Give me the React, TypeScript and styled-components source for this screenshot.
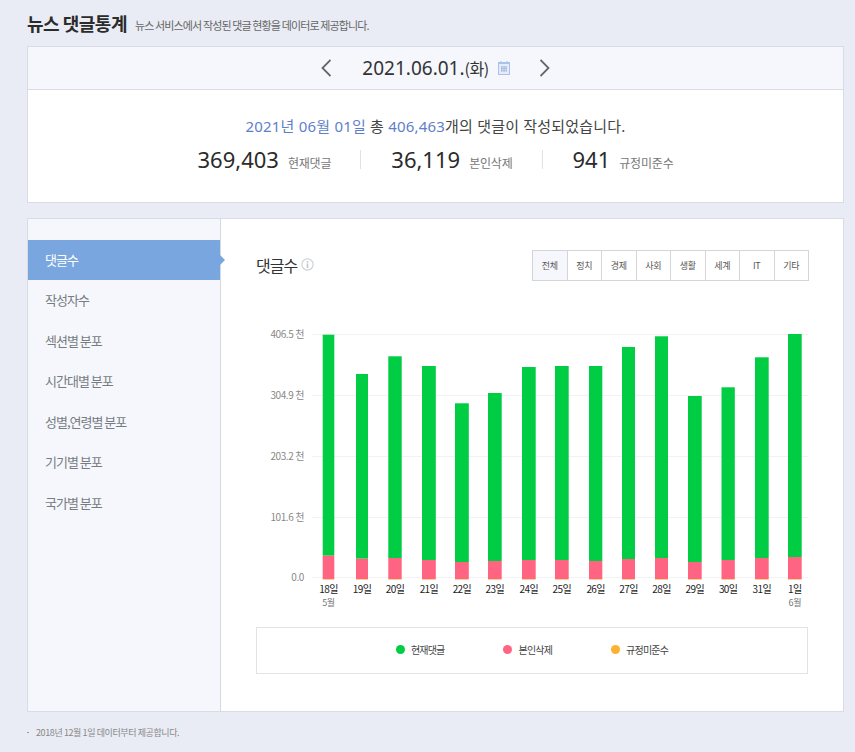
import React from 'react';
import styled, { createGlobalStyle } from 'styled-components';

const GlobalStyle = createGlobalStyle`
    html, body {
        margin: 0;
        padding: 0;
        background: #e9ecf4;
    }
    body {
        font-family: "Noto Sans", "Noto Sans CJK KR", sans-serif;
        color: #333;
    }
`;

const Page = styled.div`
    width: 855px;
    height: 752px;
    overflow: hidden;
    box-sizing: border-box;
    padding: 11px 11px 0 27px;
`;

const Heading = styled.div`
    display: flex;
    align-items: center;
    height: 24px;
    margin-bottom: 11px;
`;

const Title = styled.h1`
    margin: 0 8px 0 0;
    font-size: 18px;
    font-weight: 700;
    letter-spacing: -0.5px;
    color: #2b2b2b;
    font-family: "Noto Sans CJK KR", sans-serif;
`;

const SubTitle = styled.span`
    font-size: 11px;
    letter-spacing: -0.87px;
    color: #666;
    font-family: "Noto Sans CJK KR", sans-serif;
    padding-top: 3px;
`;

const Card = styled.section`
    background: #fff;
    border: 1px solid #d8dce6;
    box-sizing: border-box;
`;

const SummaryCard = styled(Card)`
    height: 157px;
    margin-bottom: 15px;
`;

const DateBar = styled.div`
    display: flex;
    align-items: center;
    justify-content: center;
    height: 43px;
    box-sizing: border-box;
    background: #f5f7fc;
    border-bottom: 1px solid #d8dce6;
`;

const ArrowButton = styled.button`
    display: flex;
    padding: 0;
    border: 0;
    background: none;
`;

const DateText = styled.span`
    margin: 0 9px 0 31px;
    font-size: 19px;
    color: #333;
    white-space: nowrap;
`;

const DateDay = styled.span`
    font-size: 16px;
    font-family: "Noto Sans CJK KR", sans-serif;
    letter-spacing: -0.5px;
`;

const CalendarButton = styled.button`
    display: flex;
    padding: 0;
    margin-right: 30px;
    border: 0;
    background: none;
`;

const SummaryBody = styled.div`
    display: flex;
    flex-direction: column;
    align-items: center;
    padding-top: 24px;
`;

const Sentence = styled.p`
    margin: 0 0 12px;
    height: 24px;
    line-height: 24px;
    font-size: 15px;
    letter-spacing: 0.2px;
    color: #444;
    white-space: nowrap;
`;

const Accent = styled.span`
    color: #5f7fc9;
`;

const StatRow = styled.div`
    display: flex;
    align-items: center;
`;

const Stat = styled.div<{ $first?: boolean; $last?: boolean }>`
    display: flex;
    align-items: baseline;
    height: 19px;
    line-height: 19px;
    padding: 0 ${p => (p.$last ? 0 : 29)}px 0 ${p => (p.$first ? 0 : 30)}px;
    border-right: ${p => (p.$last ? 'none' : '1px solid #dfe2e8')};
`;

const StatValue = styled.strong`
    font-size: 22px;
    font-weight: 400;
    color: #2b2b2b;
    margin-right: 9px;
`;

const StatLabel = styled.span`
    font-size: 12px;
    letter-spacing: -0.2px;
    color: #777;
    font-family: "Noto Sans CJK KR", sans-serif;
`;

const StatsCard = styled(Card)`
    display: flex;
    height: 494px;
`;

const SideNav = styled.nav`
    width: 193px;
    flex: none;
    box-sizing: border-box;
    padding-top: 21px;
    background: #f5f7fc;
    border-right: 1px solid #d3d9e4;
`;

const NavItem = styled.a<{ $active?: boolean }>`
    position: relative;
    display: flex;
    align-items: center;
    height: 40.5px;
    padding: 0 0 2px 17px;
    box-sizing: border-box;
    font-size: 13px;
    letter-spacing: -1px;
    font-family: "Noto Sans CJK KR", sans-serif;
    color: ${p => (p.$active ? '#fff' : '#777b82')};
    background: ${p => (p.$active ? '#79a6de' : 'transparent')};

    ${p =>
        p.$active &&
        `
        width: 192px;
        height: 40px;
        margin-bottom: 0.5px;
        &::after {
            content: '';
            position: absolute;
            left: 192px;
            top: 15px;
            border-left: 5px solid #79a6de;
            border-top: 5px solid transparent;
            border-bottom: 5px solid transparent;
        }
    `}
`;

const Main = styled.div`
    flex: 1;
    padding: 31px 35px 0;
`;

const ChartHeader = styled.div`
    display: flex;
    justify-content: space-between;
    align-items: center;
    height: 31px;
    margin-bottom: 39px;
`;

const ChartTitle = styled.h2`
    display: flex;
    align-items: center;
    gap: 4px;
    margin: 0 0 2px;
    font-size: 16px;
    font-weight: 400;
    letter-spacing: -1px;
    color: #333;
    font-family: "Noto Sans CJK KR", sans-serif;
`;

const Tabs = styled.div`
    display: flex;
    margin-right: -1px;
`;

const Tab = styled.button<{ $active?: boolean }>`
    width: 33.5px;
    height: 29px;
    margin-left: -1px;
    padding: 0;
    box-sizing: content-box;
    border: 1px solid #d5d5d5;
    background: ${p => (p.$active ? '#f5f7fc' : '#fff')};
    font-size: 9px;
    letter-spacing: -0.3px;
    color: #555;
    font-family: "Noto Sans CJK KR", sans-serif;
`;

const ChartSvg = styled.svg`
    display: block;
    width: 552px;
    height: 290px;
    margin-bottom: 17px;
`;

const AxisLabel = styled.text`
    font-size: 10px;
    letter-spacing: -0.4px;
    fill: #888;
    font-family: "Noto Sans CJK KR", sans-serif;
`;

const DayLabel = styled.text`
    font-size: 10px;
    letter-spacing: -0.6px;
    fill: #222;
    font-family: "Noto Sans CJK KR", sans-serif;
`;

const MonthLabel = styled.text`
    font-size: 9px;
    letter-spacing: -0.4px;
    fill: #777;
    font-family: "Noto Sans CJK KR", sans-serif;
`;

const Legend = styled.div`
    display: flex;
    justify-content: center;
    align-items: center;
    gap: 59px;
    height: 47px;
    padding-bottom: 2px;
    box-sizing: border-box;
    border: 1px solid #e3e3e3;
`;

const LegendItem = styled.div`
    display: flex;
    align-items: center;
    gap: 6px;
    font-size: 10px;
    letter-spacing: -0.8px;
    color: #444;
    font-family: "Noto Sans CJK KR", sans-serif;
`;

const LegendDot = styled.i<{ $color: string }>`
    width: 9px;
    height: 9px;
    border-radius: 50%;
    background: ${p => p.$color};
`;

const FootNote = styled.p`
    margin: 14px 0 0;
    display: flex;
    align-items: center;
    gap: 7px;
    font-size: 9px;
    letter-spacing: -0.4px;
    color: #888;
    font-family: "Noto Sans CJK KR", sans-serif;
`;

const Bullet = styled.i`
    width: 2px;
    height: 1px;
    background: #999;
`;

const NAV_ITEMS = ['댓글수', '작성자수', '섹션별 분포', '시간대별 분포', '성별,연령별 분포', '기기별 분포', '국가별 분포'];
const TABS = ['전체', '정치', '경제', '사회', '생활', '세계', 'IT', '기타'];

// x, width, top of green, top of pink (page coordinates, read off the reference)
const BARS: { day: string; month?: string; x: number; w: number; top: number; pink: number }[] = [
    { day: '18일', month: '5월', x: 322.7, w: 11.6, top: 334.7, pink: 555.7 },
    { day: '19일', x: 356, w: 12, top: 374, pink: 558.7 },
    { day: '20일', x: 388.3, w: 13.4, top: 356.3, pink: 558 },
    { day: '21일', x: 422, w: 13.8, top: 366, pink: 560 },
    { day: '22일', x: 455, w: 13.8, top: 403.3, pink: 562 },
    { day: '23일', x: 488, w: 13.7, top: 393, pink: 561 },
    { day: '24일', x: 522, w: 13.7, top: 367, pink: 560 },
    { day: '25일', x: 555, w: 13.7, top: 366, pink: 560 },
    { day: '26일', x: 589, w: 13.3, top: 366, pink: 561 },
    { day: '27일', x: 622, w: 13, top: 347, pink: 559 },
    { day: '28일', x: 655, w: 13, top: 336.3, pink: 558 },
    { day: '29일', x: 688, w: 13.7, top: 396, pink: 562 },
    { day: '30일', x: 721.5, w: 13.3, top: 387.3, pink: 560 },
    { day: '31일', x: 755, w: 13.7, top: 357.3, pink: 558 },
    { day: '1일', month: '6월', x: 788, w: 13.7, top: 334, pink: 557 },
];

const TICKS = [
    { label: '406.5 천', y: 334.5 },
    { label: '304.9 천', y: 395.5 },
    { label: '203.2 천', y: 456.5 },
    { label: '101.6 천', y: 517.5 },
    { label: '0.0', y: 577.5 },
];

const Chart = () => (
    <ChartSvg viewBox="256 320 552 290">
        {TICKS.map(t => (
            <g key={t.label}>
                <line x1={312} x2={808} y1={t.y} y2={t.y} stroke="#f1f2f4" />
                <AxisLabel x={304} y={t.y + 3.5} textAnchor="end">
                    {t.label}
                </AxisLabel>
            </g>
        ))}
        {BARS.map(b => {
            const center = b.x + b.w / 2;
            return (
                <g key={b.day}>
                    <rect x={b.x} y={b.top} width={b.w} height={b.pink - b.top} fill="#00cc44" />
                    <rect x={b.x} y={b.pink} width={b.w} height={579 - b.pink} fill="#ff6482" />
                    <rect x={b.x} y={579} width={b.w} height={0.6} fill="#ffb13d" />
                    <DayLabel x={center} y={592.5} textAnchor="middle">
                        {b.day}
                    </DayLabel>
                    {b.month && (
                        <MonthLabel x={center} y={605.5} textAnchor="middle">
                            {b.month}
                        </MonthLabel>
                    )}
                </g>
            );
        })}
    </ChartSvg>
);

const Chevron = ({ points }: { points: string }) => (
    <svg width="10" height="18" viewBox="0 0 10 18" fill="none">
        <polyline points={points} stroke="#666" strokeWidth="1.8" />
    </svg>
);

const CalendarIcon = () => (
    <svg width="12" height="14" viewBox="0 0 12 14">
        <rect x="0.5" y="1.5" width="11" height="12" fill="#e6edfa" stroke="#a9c2ec" />
        <rect x="0" y="1" width="12" height="2" fill="#a9c2ec" />
        <rect x="2.5" y="0" width="1" height="2" fill="#a9c2ec" />
        <rect x="8.5" y="0" width="1" height="2" fill="#a9c2ec" />
        <path d="M3 6h6M3 8h6M3 10h6M4 5.5v5M6 5.5v5M8 5.5v5" stroke="#8fa9dc" strokeWidth="1" strokeDasharray="1 0.6" fill="none" />
    </svg>
);

const InfoIcon = () => (
    <svg width="13" height="13" viewBox="0 0 13 13" fill="none">
        <circle cx="6.5" cy="6.5" r="5.6" stroke="#cfd2d6" strokeWidth="1.2" />
        <rect x="5.7" y="3" width="1.6" height="1.6" fill="#c4c7cc" />
        <rect x="5.7" y="5.4" width="1.6" height="4.6" fill="#c4c7cc" />
    </svg>
);

const App = () => (
    <Page>
        <GlobalStyle />
        <Heading>
            <Title>뉴스 댓글통계</Title>
            <SubTitle>뉴스 서비스에서 작성된 댓글 현황을 데이터로 제공합니다.</SubTitle>
        </Heading>

        <SummaryCard>
            <DateBar>
                <ArrowButton>
                    <Chevron points="9.5,1 1.5,9 9.5,17" />
                </ArrowButton>
                <DateText>
                    2021.06.01.<DateDay>(화)</DateDay>
                </DateText>
                <CalendarButton>
                    <CalendarIcon />
                </CalendarButton>
                <ArrowButton>
                    <Chevron points="0.5,1 8.5,9 0.5,17" />
                </ArrowButton>
            </DateBar>
            <SummaryBody>
                <Sentence>
                    <Accent>2021년 06월 01일</Accent> 총 <Accent>406,463</Accent>개의 댓글이 작성되었습니다.
                </Sentence>
                <StatRow>
                    <Stat $first>
                        <StatValue>369,403</StatValue>
                        <StatLabel>현재댓글</StatLabel>
                    </Stat>
                    <Stat>
                        <StatValue>36,119</StatValue>
                        <StatLabel>본인삭제</StatLabel>
                    </Stat>
                    <Stat $last>
                        <StatValue>941</StatValue>
                        <StatLabel>규정미준수</StatLabel>
                    </Stat>
                </StatRow>
            </SummaryBody>
        </SummaryCard>

        <StatsCard>
            <SideNav>
                {NAV_ITEMS.map((item, i) => (
                    <NavItem key={item} $active={i === 0}>
                        {item}
                    </NavItem>
                ))}
            </SideNav>
            <Main>
                <ChartHeader>
                    <ChartTitle>
                        댓글수
                        <InfoIcon />
                    </ChartTitle>
                    <Tabs>
                        {TABS.map((tab, i) => (
                            <Tab key={tab} $active={i === 0}>
                                {tab}
                            </Tab>
                        ))}
                    </Tabs>
                </ChartHeader>
                <Chart />
                <Legend>
                    <LegendItem>
                        <LegendDot $color="#00cc44" />
                        현재댓글
                    </LegendItem>
                    <LegendItem>
                        <LegendDot $color="#ff6482" />
                        본인삭제
                    </LegendItem>
                    <LegendItem>
                        <LegendDot $color="#ffb02e" />
                        규정미준수
                    </LegendItem>
                </Legend>
            </Main>
        </StatsCard>

        <FootNote>
            <Bullet />
            2018년 12월 1일 데이터부터 제공합니다.
        </FootNote>
    </Page>
);

export default App;
